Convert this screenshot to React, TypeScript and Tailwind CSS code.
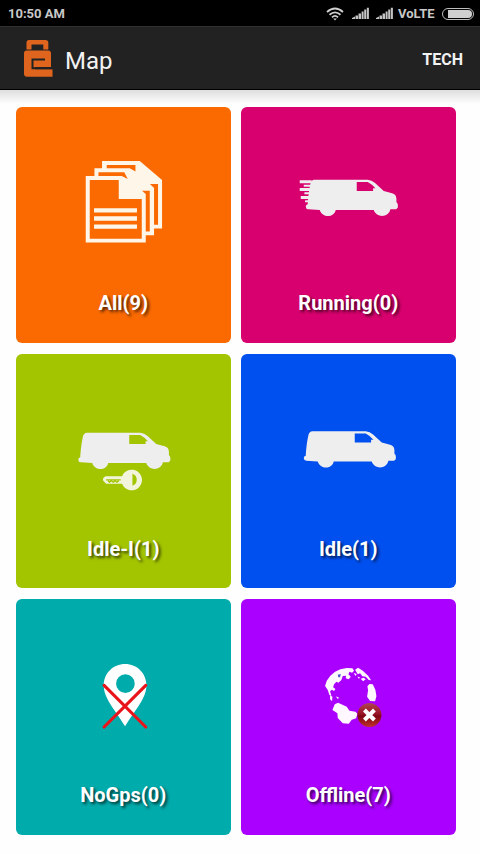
import type { ReactNode } from "react";

const THIRD = "scale(.33333)";

function Van({ fast = false }: { fast?: boolean }) {
  return (
    <g>
      <path
        fill="#eeeeee"
        d="M68 47H228Q240 48 250 57L276 81L301 88Q313 91 314 104V115Q320 119 318 131L313 136H296C290 162 254 162 246 138H132C126 162 92 162 84 138L50 136Q43 136 42 128Q42 122 48 121C49 105 51 80 56 59Q58 48 68 47Z"
      />
      <path className="fill-current" d="M195 54H228Q240 60 251 73H244V81H195Z" />
      {fast && (
        <g>
          <path fill="#eeeeee" d="M24 49H60V58H24ZM36 62H60V68H36ZM24 72H60V81H24ZM38 85H60V91H38ZM27 96H60V105H27ZM40 109H60V115H40Z" />
        </g>
      )}
    </g>
  );
}

function Documents() {
  return (
    <g>
      <path fill="#fff6ea" d="M86 176H94.7V168.3H102.3V161H140L162.3 180V228.5H154.3V235.3H146V242.6H86Z" />
      <path
        className="fill-current"
        d="M90 180H119V199H142V238.8H90ZM98.7 172.3H124.5L128 179L122 176H98.7ZM107 165H135.7V171.5L130 168.3H107ZM142.3 190.8H150V231.5H146V194ZM150.2 184H158.3V224.8H154.3V188Z"
      />
      <path fill="#fff6ea" d="M94.3 208.3H137.2V212.6H94.3ZM94.3 216.2H137.2V220.8H94.3ZM94.3 224.4H137.2V228.8H94.3Z" />
    </g>
  );
}

function Key() {
  return (
    <g>
      <path fill="#f2f5dc" d="M122 167H172A31 31 0 1 1 172 190H124L115 180V173Z" />
      <path className="fill-current" d="M203 160Q216 165 216 178Q216 191 203 196Z" />
      <path fill="none" className="stroke-current" strokeWidth="4" d="M124 178H168M130 181L134 185L140 181L145 185L151 181L156 185L162 181" />
    </g>
  );
}

function CrossedPin() {
  return (
    <g>
      <path
        fill="#fff"
        fillRule="evenodd"
        d="M106 42C70 42 42 70 42 106C42 145 72 174 106 229C140 174 170 145 170 106C170 70 142 42 106 42ZM107 73A28 28 0 1 1 107 129A28 28 0 1 1 107 73Z"
      />
      <path stroke="#e8141a" strokeWidth="9.5" strokeLinecap="round" d="M43 106L168 231M168 106L43 231" />
    </g>
  );
}

function GlobeError() {
  return (
    <g>
      <g fill="#fff8ff">
        <path d="M46 93L51 77L62 62L76 50L92 43L111 39L128 40L133 47L127 53L119 50L116 58L123 65L117 73L108 70L109 62L99 63L95 75L86 83L80 80L73 88L70 97L77 102L73 108L66 104L61 109L65 123L59 120L54 105Z" />
        <path d="M61 121L68 125L67 139L61 133ZM78 124L88 128L84 132ZM136 44L145 38L159 47L175 62L184 76L177 75L168 65L158 64L151 55L144 58ZM132 54L141 57L137 63ZM143 65L150 66L148 72ZM153 71L162 68L168 73L160 79Z" />
        <path d="M179 87L189 88L197 105L200 124L196 139L181 138L172 125L175 106L173 94Z" />
        <path d="M75 148L85 143L98 149L111 155L119 167L137 170L143 176L139 190L126 194L117 206L99 205L84 189L83 175L68 165Z" />
      </g>
      <path fill="#4353c5" d="M84 59L93 57L91 67H86Z" />
      <circle cx="179" cy="180" r="36" fill="url(#errorBadge)" />
      <path stroke="#fff" strokeWidth="12" d="M164 165L194 195M194 165L164 195" />
      <defs>
        <linearGradient id="errorBadge" x1="0" y1="0" x2="0" y2="1">
          <stop offset="0" stopColor="#b04450" />
          <stop offset=".45" stopColor="#981527" />
          <stop offset=".55" stopColor="#7f0714" />
          <stop offset="1" stopColor="#c0302c" />
        </linearGradient>
      </defs>
    </g>
  );
}

function Tile({ label, tone, viewBox, children }: { label: string; tone: string; viewBox: string; children: ReactNode }) {
  return (
    <button className={`flex flex-col items-center rounded-[6px] ${tone}`}>
      <svg viewBox={viewBox} className="mt-10 h-[100px] w-[120px] shrink-0">
        {children}
      </svg>
      <span className="mt-[41.5px] text-[20px] leading-7 font-bold text-white [text-shadow:2px_2px_3px_rgba(0,0,0,0.7)]">{label}</span>
    </button>
  );
}

function Signal() {
  return (
    <svg viewBox="0 0 17 13" className="h-[13px] w-[17px]" fill="#c4c4c4">
      <path d="M0 12V11L3 9.5V12ZM3.5 12V8.5H6V12ZM6.5 12V6.5H9V12ZM9.6 12V4.5H11.6V12ZM12.2 12V2.5H14.2V12ZM14.8 12V.8H16.9V12Z" />
    </svg>
  );
}

export default function App() {
  return (
    <div className="flex h-[854px] w-[480px] flex-col bg-[#fefefe] font-[Roboto,sans-serif]">
      <div className="flex h-[26px] items-center bg-black pr-[6px] pl-2 text-[#c8c8c8]">
        <span className="pt-[2px] text-[13px] leading-4 font-bold">10:50 AM</span>
        <svg viewBox="0 0 18 14" className="mt-px mr-2 ml-auto h-[14px] w-[18px]" fill="none" stroke="#d0d0d0" strokeWidth="1.8">
          <path d="M1 5Q9 -2 17 5M3.5 7.8Q9 3 14.5 7.8M6 10.3Q9 7.5 12 10.3" />
          <path d="M7.2 11.5H10.8L9 13.5Z" fill="#d0d0d0" stroke="none" />
        </svg>
        <Signal />
        <span className="ml-[7px] flex"><Signal /></span>
        <span className="ml-[5px] w-[38px] pt-[2px] text-[13px] leading-4 font-bold">VoLTE</span>
        <span className="mt-px ml-[6px] flex h-3 w-8 justify-end rounded-full border border-[#bdbdbd] p-px">
          <span className="h-2 w-[24px] rounded-r-full bg-[#cfcfcf]" />
        </span>
      </div>

      <header className="flex h-16 items-center border-t border-b border-t-[#303030] border-b-black bg-[#222222] pr-[17px] pl-[23px] text-[#f2f2f2]">
        <svg viewBox="0 0 31 40" className="h-10 w-[31px]" fill="#df651e">
          <path d="M6 2H22.5Q25.3 2 25.3 4.8V11.5H20.3V6.5H8.5V11.5H3.5V4.8Q3.5 2 6 2Z" />
          <path d="M3.5 12.5H25Q28 12.5 28 15.5V29H12V31.3H29.5V38.7H4Q1 38.7 1 35.7V15.5Q1 12.5 3.5 12.5Z" />
          <path d="M22 21.5H9.5V30.2H29.5" fill="none" stroke="#222222" strokeWidth="2" />
        </svg>
        <span className="ml-[11px] pt-[6px] text-[24px] leading-7">Map</span>
        <span className="ml-auto pt-1 text-[16px] leading-5 font-bold">TECH</span>
      </header>

      <main className="grid flex-1 grid-cols-[214.5px_214.5px] grid-rows-[235.5px_234.5px_235.5px] content-start gap-x-[10.5px] gap-y-[11px] bg-[linear-gradient(#dedede,#fefefe_14px)] pt-[17px] pl-4">
        <Tile label="All(9)" tone="bg-[#fa6a00] text-[#fa6a00]" viewBox="63.25 147 120 100">
          <Documents />
        </Tile>
        <Tile label="Running(0)" tone="bg-[#d8006e] text-[#d8006e]" viewBox="288.25 147 120 100">
          <g transform="translate(292 164)"><g transform={THIRD}><Van fast /></g></g>
        </Tile>
        <Tile label="Idle-I(1)" tone="bg-[#a3c500] text-[#a3c500]" viewBox="63.25 393.5 120 100">
          <g transform="translate(64.5 416.5)"><g transform={THIRD}><Van /></g></g>
          <g transform="translate(65 420)"><g transform={THIRD}><Key /></g></g>
        </Tile>
        <Tile label="Idle(1)" tone="bg-[#0050ef] text-[#0050ef]" viewBox="288.25 393.5 120 100">
          <g transform="translate(290 415)"><g transform={THIRD}><Van /></g></g>
        </Tile>
        <Tile label="NoGps(0)" tone="bg-[#00abab] text-[#00abab]" viewBox="63.25 639 120 100">
          <g transform="translate(90 650)"><g transform={THIRD}><CrossedPin /></g></g>
        </Tile>
        <Tile label="Offline(7)" tone="bg-[#aa00ff] text-[#aa00ff]" viewBox="288.25 639 120 100">
          <g transform="translate(310 655)"><g transform={THIRD}><GlobeError /></g></g>
        </Tile>
      </main>
    </div>
  );
}
